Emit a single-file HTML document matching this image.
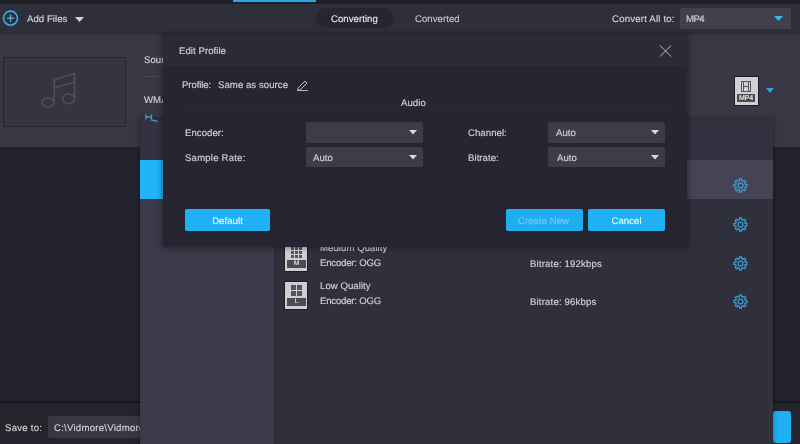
<!DOCTYPE html>
<html><head><meta charset="utf-8">
<style>
*{margin:0;padding:0;box-sizing:border-box}
html,body{width:800px;height:444px;overflow:hidden;background:#23232e;font-family:"Liberation Sans",sans-serif;color:#d2d2d8}
.a{position:absolute}
.t{position:absolute;white-space:nowrap;font-size:9.6px;line-height:10px;letter-spacing:0.05px;text-rendering:geometricPrecision;will-change:transform;-webkit-text-stroke:0.15px currentColor}
</style></head><body>
<!-- top strip -->
<div class="a" style="left:0;top:0;width:800px;height:4px;background:#1f1f27"></div>
<div class="a" style="left:233px;top:0;width:83px;height:2px;background:#2aa6e0"></div>
<!-- toolbar -->
<div class="a" style="left:0;top:4px;width:800px;height:31px;background:#2f2f3c"></div>
<svg class="a" style="left:2px;top:10px" width="18" height="17" viewBox="0 0 18 17"><circle cx="8.5" cy="8.2" r="7" fill="none" stroke="#33ade6" stroke-width="1.7"/><path d="M8.5 4.6V11.8M4.9 8.2H12.1" stroke="#4cbbec" stroke-width="1.3"/></svg>
<div class="t" style="left:27px;top:15px">Add Files</div>
<svg class="a" style="left:75px;top:17px" width="9" height="5" viewBox="0 0 9 5"><path d="M0 0H9L4.5 5Z" fill="#d0d0d6"/></svg>
<div class="a" style="left:316px;top:8px;width:78px;height:20px;border-radius:10px;background:#262632"></div>
<div class="t" style="left:331px;top:15px;color:#e6e6ea">Converting</div>
<div class="t" style="left:415px;top:15px;color:#c4c4cc">Converted</div>
<div class="t" style="left:612px;top:15px;letter-spacing:0.2px">Convert All to:</div>
<div class="a" style="left:680px;top:8px;width:111px;height:21px;border-radius:2px;background:#41414c"></div>
<div class="t" style="left:686px;top:15px;letter-spacing:-0.6px">MP4</div>
<svg class="a" style="left:774px;top:16px" width="9" height="5" viewBox="0 0 9 5"><path d="M0 0H9L4.5 5Z" fill="#3cb2e8"/></svg>

<!-- file row -->
<div class="a" style="left:0;top:35px;width:800px;height:112px;background:#383845"></div>
<div class="a" style="left:3px;top:57px;width:123px;height:70px;border:1px solid #25252f;background:#353542"></div>
<svg class="a" style="left:38px;top:70px" width="44" height="40" viewBox="38 70 44 40"><g fill="none" stroke="#4f4f5c" stroke-width="1.6"><path d="M54.2 102V80L74.5 73.5V98.8M54.2 88L74.5 82"/><ellipse cx="48" cy="102.5" rx="6" ry="4.8"/><ellipse cx="68.5" cy="98.8" rx="6" ry="4.8"/></g></svg>
<div class="t" style="left:144px;top:56px">Source</div>
<div class="a" style="left:144px;top:76px;width:30px;height:1px;background:#45454f"></div>
<div class="t" style="left:144px;top:96px">WMA</div>
<div class="a" style="left:734px;top:76px;width:25px;height:30px;background:#1c1c22"></div>
<div class="a" style="left:735px;top:77px;width:23px;height:28px;background:#cfcfd4"></div>
<svg class="a" style="left:741px;top:81px" width="10" height="11" viewBox="0 0 10 11"><g fill="none" stroke="#55555f" stroke-width="1"><rect x="0.5" y="0.5" width="9" height="10"/><path d="M2.5 0.5V10.5M7.5 0.5V10.5M2.5 5.5H7.5"/></g></svg>
<div class="a" style="left:737px;top:94px;width:18px;height:8px;background:#4a4a52"></div>
<div class="t" style="left:737px;top:95px;width:18px;text-align:center;font-size:7px;line-height:7px;color:#f0f0f0;letter-spacing:-0.2px">MP4</div>
<svg class="a" style="left:766px;top:88px" width="8" height="5" viewBox="0 0 8 5"><path d="M0 0H8L4 5Z" fill="#35a3dc"/></svg>

<!-- bottom bar -->
<div class="a" style="left:0;top:401px;width:800px;height:2px;background:#161620"></div>
<div class="a" style="left:0;top:403px;width:800px;height:41px;background:#24242d"></div>
<div class="t" style="left:5px;top:424px;letter-spacing:0.25px">Save to:</div>
<div class="a" style="left:48px;top:416px;width:100px;height:22px;background:#383843;border-radius:2px"></div>
<div class="t" style="left:54px;top:424px;letter-spacing:0.25px">C:\Vidmore\Vidmore Video Converter</div>
<div class="a" style="left:773px;top:411px;width:18px;height:32px;background:#1fb0f2;border-radius:3px"></div>

<!-- format panel -->
<div class="a" style="left:140px;top:119px;width:633px;height:325px;background:#30303d;overflow:hidden;box-shadow:0 0 4px 1px rgba(0,0,0,0.3)">
  <div class="a" style="left:0;top:41px;width:134px;height:284px;background:#3b3a4a"></div><div class="a" style="left:134px;top:80px;width:2px;height:245px;background:#2c2b38"></div>
  <div class="a" style="left:0;top:41px;width:23px;height:39px;background:#22b2f6"></div>
  <div class="a" style="left:0;top:0;width:633px;height:41px;background:#32313f"></div>
  <div class="a" style="left:135px;top:41px;width:498px;height:39px;background:#454455"></div>
  <div class="a" style="left:629px;top:0;width:1px;height:41px;background:#34333f"></div><div class="a" style="left:629px;top:80px;width:1px;height:245px;background:#34333f"></div>
</div>
<svg class="a" style="left:144px;top:112px" width="16" height="12" viewBox="144 112 16 12"><path d="M146 114.5V119.5M146 117H152M151.5 114.5V120L157.5 121.5" fill="none" stroke="#3a9ccc" stroke-width="1.3"/></svg>
<!-- list rows -->
<div class="a" style="left:284px;top:243px;width:24px;height:29px;background:#1e1e24"></div>
<div class="a" style="left:285px;top:244px;width:22px;height:27px;background:#cdcdd2"></div>
<div class="a" style="left:287px;top:260px;width:19px;height:8px;background:#4b4b55"></div>
<div class="t" style="left:287px;top:260px;width:19px;text-align:center;font-size:6.5px;line-height:8px;color:#e6e6ea;letter-spacing:0">M</div>
<svg class="a" style="left:291px;top:247px" width="11" height="11" viewBox="0 0 11 11"><g fill="#55555f"><rect x="0" y="0" width="3" height="3"/><rect x="4" y="0" width="3" height="3"/><rect x="8" y="0" width="3" height="3"/><rect x="0" y="4" width="3" height="3"/><rect x="4" y="4" width="3" height="3"/><rect x="8" y="4" width="3" height="3"/><rect x="0" y="8" width="3" height="3"/><rect x="4" y="8" width="3" height="3"/><rect x="8" y="8" width="3" height="3"/></g></svg>
<div class="t" style="left:320px;top:244px">Medium Quality</div>
<div class="t" style="left:320px;top:259px;letter-spacing:-0.2px">Encoder: OGG</div>
<div class="t" style="left:530px;top:260px;letter-spacing:0.17px">Bitrate: 192kbps</div>

<div class="a" style="left:284px;top:281px;width:24px;height:29px;background:#1e1e24"></div>
<div class="a" style="left:285px;top:282px;width:22px;height:27px;background:#cdcdd2"></div>
<div class="a" style="left:287px;top:298px;width:19px;height:8px;background:#4b4b55"></div>
<div class="t" style="left:287px;top:298px;width:19px;text-align:center;font-size:6.5px;line-height:8px;color:#e6e6ea;letter-spacing:0">L</div>
<svg class="a" style="left:291px;top:285px" width="11" height="11" viewBox="0 0 11 11"><g fill="#55555f"><rect x="0" y="0" width="5" height="5"/><rect x="6" y="0" width="5" height="5"/><rect x="0" y="6" width="5" height="5"/><rect x="6" y="6" width="5" height="5"/></g></svg>
<div class="t" style="left:320px;top:282px">Low Quality</div>
<div class="t" style="left:320px;top:297px;letter-spacing:-0.2px">Encoder: OGG</div>
<div class="t" style="left:530px;top:298px;letter-spacing:0.17px">Bitrate: 96kbps</div>

<!-- gears -->
<svg width="0" height="0" style="position:absolute"><defs><g id="gear"><path fill="none" stroke="#3a9dd4" stroke-width="1.2" stroke-linejoin="round" d="M6.03 0.88 L7.97 0.88 L8.07 2.53 L9.40 3.08 L10.64 1.98 L12.02 3.36 L10.92 4.60 L11.47 5.93 L13.12 6.03 L13.12 7.97 L11.47 8.07 L10.92 9.40 L12.02 10.64 L10.64 12.02 L9.40 10.92 L8.07 11.47 L7.97 13.12 L6.03 13.12 L5.93 11.47 L4.60 10.92 L3.36 12.02 L1.98 10.64 L3.08 9.40 L2.53 8.07 L0.88 7.97 L0.88 6.03 L2.53 5.93 L3.08 4.60 L1.98 3.36 L3.36 1.98 L4.60 3.08 L5.93 2.53Z"/><circle cx="7" cy="7" r="2.3" fill="none" stroke="#3a9dd4" stroke-width="1.2"/></g></defs></svg>
<svg class="a" style="left:733px;top:178px" width="15" height="15" viewBox="0 0 14 14"><use href="#gear"/></svg>
<svg class="a" style="left:733px;top:217px" width="15" height="15" viewBox="0 0 14 14"><use href="#gear"/></svg>
<svg class="a" style="left:733px;top:256px" width="15" height="15" viewBox="0 0 14 14"><use href="#gear"/></svg>
<svg class="a" style="left:733px;top:294px" width="15" height="15" viewBox="0 0 14 14"><use href="#gear"/></svg>

<!-- dialog -->
<div class="a" style="left:163px;top:35px;width:524px;height:212px;background:#262632;box-shadow:0 0 5px 1px rgba(0,0,0,0.4)">
<div class="a" style="left:0;top:0;width:524px;height:31px;background:#2b2b38"></div>
<div class="a" style="left:22px;top:70px;width:487px;height:1px;background:#2a2a34"></div>
</div>
<div class="t" style="left:179px;top:47px">Edit Profile</div>
<svg class="a" style="left:659px;top:45px" width="13" height="12" viewBox="0 0 13 12"><path d="M1 0.5L12 11.5M12 0.5L1 11.5" stroke="#bdbdc4" stroke-width="1"/></svg>
<div class="t" style="left:182px;top:81px;letter-spacing:-0.1px">Profile:</div><div class="t" style="left:218px;top:81px">Same as source</div>
<svg class="a" style="left:296px;top:79px" width="13" height="12" viewBox="0 0 13 12"><path d="M2 9L9 2L11 4L4 11H2Z M1 11.5H12" fill="none" stroke="#b4b4bc" stroke-width="1"/></svg>
<div class="t" style="left:401px;top:99px">Audio</div>

<div class="t" style="left:185px;top:129px">Encoder:</div>
<div class="t" style="left:185px;top:154px;letter-spacing:0.2px">Sample Rate:</div>
<div class="a" style="left:306px;top:122px;width:117px;height:21px;background:#3d3d48;border-radius:2px"></div>
<div class="a" style="left:306px;top:147px;width:117px;height:20px;background:#3d3d48;border-radius:2px"></div>
<div class="t" style="left:313px;top:154px">Auto</div>
<svg class="a" style="left:409px;top:130px" width="8" height="5" viewBox="0 0 8 5"><path d="M0 0H8L4 4.6Z" fill="#d8d8de"/></svg>
<svg class="a" style="left:409px;top:155px" width="8" height="5" viewBox="0 0 8 5"><path d="M0 0H8L4 4.6Z" fill="#d8d8de"/></svg>

<div class="t" style="left:468px;top:129px">Channel:</div>
<div class="t" style="left:468px;top:154px">Bitrate:</div>
<div class="a" style="left:548px;top:122px;width:117px;height:21px;background:#3d3d48;border-radius:2px"></div>
<div class="a" style="left:548px;top:147px;width:117px;height:20px;background:#3d3d48;border-radius:2px"></div>
<div class="t" style="left:556px;top:129px">Auto</div>
<div class="t" style="left:557px;top:154px">Auto</div>
<svg class="a" style="left:651px;top:130px" width="8" height="5" viewBox="0 0 8 5"><path d="M0 0H8L4 4.6Z" fill="#d8d8de"/></svg>
<svg class="a" style="left:651px;top:155px" width="8" height="5" viewBox="0 0 8 5"><path d="M0 0H8L4 4.6Z" fill="#d8d8de"/></svg>

<div class="a" style="left:185px;top:209px;width:85px;height:22px;background:#1fb0f5;border-radius:2px"></div>
<div class="t" style="left:185px;top:217px;width:85px;text-align:center;color:#eef8ff">Default</div>
<div class="a" style="left:506px;top:209px;width:77px;height:22px;background:#20aef0;border-radius:2px"></div>
<div class="t" style="left:505px;top:217px;width:77px;text-align:center;color:#72c8ef">Create New</div>
<div class="a" style="left:588px;top:209px;width:77px;height:22px;background:#1fb0f5;border-radius:2px"></div>
<div class="t" style="left:588px;top:217px;width:77px;text-align:center;color:#eef8ff">Cancel</div>
</body></html>
